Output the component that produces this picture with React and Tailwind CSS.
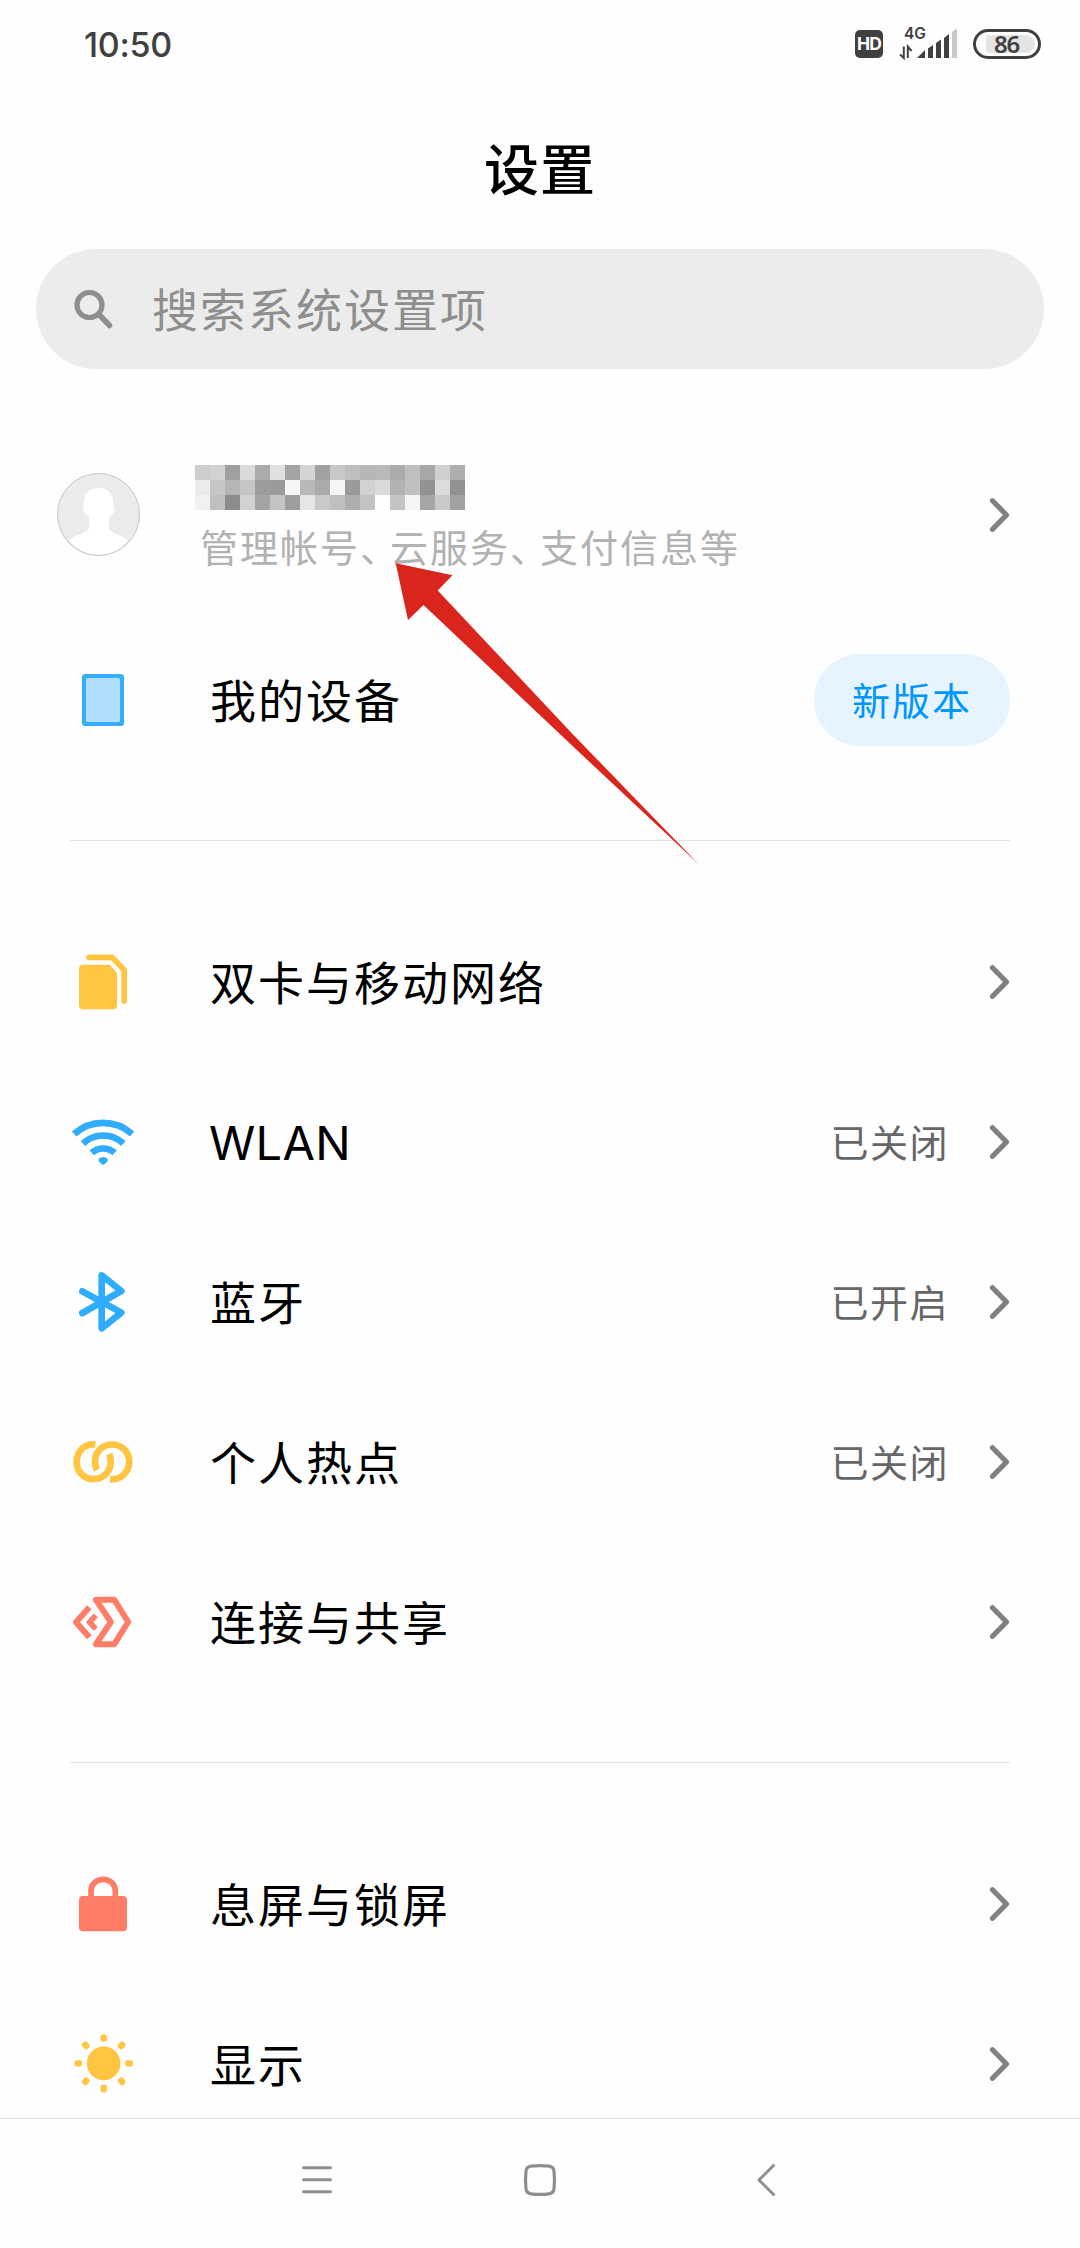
import React from "react";

const MOSAIC = [
  "#cdcdcd #d1d1d1 #9f9f9f #dadada #ababab #e0e0e0 #a4a4a4 #d4d4d4 #a1a1a1 #c7c7c7 #bebebe #b6b6b6 #b9b9b9 #ababab #bfbfbf #a7a7a7 #d0d0d0 #aeaeae",
  "#ebebeb #c6c6c6 #b5b5b5 #c5c5c5 #9c9c9c #9a9a9a #f6f6f6 #b8b8b8 #aaaaaa #f5f5f5 #9a9a9a #d1d1d1 #dadada #b2b2b2 #c0c0c0 #929292 #dbdbdb #919191",
  "#f1f1f1 #c0c0c0 #8b8b8b #d1d1d1 #a4a4a4 #c4c4c4 #9e9e9e #e5e5e5 #c9c9c9 #bfbfbf #aeaeae #c3c3c3 #fefefe #c4c4c4 #f5f5f5 #a6a6a6 #c9c9c9 #a1a1a1",
].flatMap((row) => row.split(" "));

function Icon({ viewBox, children }) {
  return (
    <svg className="h-[72px] w-[72px] shrink-0" viewBox={viewBox} fill="none">
      {children}
    </svg>
  );
}

const DeviceIcon = () => (
  <Icon viewBox="51 72 216 216">
    <rect x="96" y="102" width="126" height="156" rx="10" fill="#38adfc" />
    <rect x="108" y="114" width="102" height="132" rx="5" fill="#b0defd" />
  </Icon>
);

const SimIcon = () => (
  <Icon viewBox="51 48 216 216">
    <path d="M99 104H178L201 128V226Q201 238 189 238H99Q87 238 87 226V116Q87 104 99 104Z" fill="#ffc440" />
    <path d="M117 82H186L222.500 120V213" stroke="#ffc440" strokeWidth="17" strokeLinecap="round" strokeLinejoin="round" />
  </Icon>
);

const WifiIcon = () => (
  <Icon viewBox="51 528 216 216">
    <g stroke="#30acff" strokeWidth="20">
      <path d="M72.500 612A129 129 0 0 1 246 612" />
      <path d="M99 640.500A88 88 0 0 1 220 640.500" />
      <path d="M125 668.500A52 52 0 0 1 194 668.500" />
    </g>
    <path d="M146 686Q159.500 676 173 686Q175 691 171 696L159.500 706L148 696Q144 691 146 686Z" fill="#30acff" />
  </Icon>
);

const BluetoothIcon = () => (
  <Icon viewBox="51 48 216 216">
    <path d="M97 124L214 188L155 235V76L214 123L97 189" stroke="#30acff" strokeWidth="20" strokeLinecap="round" strokeLinejoin="round" />
  </Icon>
);

const HotspotIcon = () => (
  <Icon viewBox="51 528 216 216">
    <g stroke="#ffc440" strokeWidth="20">
      <path d="M136 583.500C105 580 80 604 80 635C80 665 102 687.500 130 687.500C160 687.500 182 665 182 635C182 626 181 619 178 612" />
      <path d="M180 687.500C211 691 237.500 667 237.500 635C237.500 606 215 583.500 187 583.500C157 583.500 135 606 135 635C135 645 137 653 141 660" />
    </g>
  </Icon>
);

const ShareIcon = () => (
  <Icon viewBox="51 1008 216 216">
    <path d="M138 1049.500H193L234.500 1116L193 1182.500H138L182.500 1116Z" stroke="#ff7c66" strokeWidth="18" strokeLinejoin="round" />
    <path d="M118 1072L78 1117L118 1162" stroke="#ff7c66" strokeWidth="18" strokeLinejoin="round" />
    <path d="M137 1096L119 1116.500L137 1137" stroke="#ff7c66" strokeWidth="17" />
  </Icon>
);

const LockIcon = () => (
  <Icon viewBox="51 54 216 216">
    <path d="M123 144V122A36.500 34 0 0 1 196 122V144" stroke="#ff7c66" strokeWidth="17" />
    <rect x="87" y="138" width="144" height="106" rx="12" fill="#ff7c66" />
  </Icon>
);

const RAYS = [0, 45, 90, 135, 180, 225, 270, 315];

const SunIcon = () => (
  <Icon viewBox="51 534 216 216">
    <circle cx="161" cy="640" r="50.500" fill="#ffc440" />
    {RAYS.map((a) => (
      <rect key={a} x="151.500" y="552.500" width="19" height="23" rx="7.500" fill="#ffc440" transform={`rotate(${a} 161 640)`} />
    ))}
  </Icon>
);

const Chevron = () => (
  <svg className="h-[40px] w-[24px] shrink-0" viewBox="0 0 24 40" fill="none">
    <path d="M6.500 5.700L20.500 20L6.500 34.300" stroke="#808080" strokeWidth="5.200" strokeLinecap="round" strokeLinejoin="round" />
  </svg>
);

function Row({ icon, label, value, latin }) {
  return (
    <div className="flex h-[160px] items-center pl-[67px] pr-[70px]">
      {icon}
      <span
        className={
          latin
            ? "ml-[70px] pt-[2px] font-['Inter',sans-serif] text-[47px] leading-[60px] tracking-[0.300px] text-black"
            : "mb-[4px] ml-[71px] text-[46px] leading-[60px] tracking-[2px] text-black"
        }
      >
        {label}
      </span>
      <span className="mb-[2px] ml-auto mr-[37px] text-[38px] leading-[50px] tracking-[1.500px] text-[#666]">{value}</span>
      <Chevron />
    </div>
  );
}

const Divider = () => <div className="ml-[70px] mr-[70px] h-px shrink-0 bg-[#e2e2e2]" />;

function StatusBar() {
  return (
    <div className="flex h-[88px] items-center pl-[84px] pr-[39px] font-['Inter',sans-serif] text-[#404040]">
      <span className="pt-[2px] text-[34px] font-medium leading-[40px] tracking-[-0.300px]">10:50</span>
      <span className="ml-auto flex h-[28px] w-[28px] items-center justify-center rounded-[5px] bg-[#404040] text-[17.500px] font-bold leading-none tracking-[-0.900px] text-white">
        HD
      </span>
      <svg className="ml-[16px] h-[34px] w-[60px] overflow-visible" viewBox="0 2 60 34">
        <text x="5" y="13.500" fontSize="15.500" fontWeight="600" fill="#404040" fontFamily="Inter, sans-serif">4G</text>
        <path d="M4.800 21.500V33L1 29.500M8.800 33V21.500L12.600 26" fill="none" stroke="#404040" strokeWidth="2" />
        <path d="M18 33L26 25V33ZM29 23.500L34 20V33H29ZM37 18L42 14.500V33H37ZM45 13L50 9V33H45Z" fill="#404040" />
        <path d="M53 7L58 3.500V33H53Z" fill="#c8c8c8" />
      </svg>
      <div className="ml-[14px] flex h-[30px] w-[68px] items-center rounded-full border-[3px] border-[#404040] pl-[10px]">
        <span className="flex h-[18px] w-[49px] items-center rounded-l-[3px] rounded-r-[9px] bg-[#e4e4e4] pl-[8px] font-['Noto_Sans',sans-serif] text-[24px] font-semibold leading-none tracking-[-1.200px]">
          86
        </span>
      </div>
    </div>
  );
}

export default function App() {
  return (
    <div className="relative flex h-[2248px] w-[1080px] flex-col overflow-hidden bg-[#fefefe] font-['Noto_Sans_CJK_SC',sans-serif]">
      <StatusBar />
      <h1 className="h-[161px] pt-[38px] text-center text-[55px] font-medium leading-[80px] tracking-[1px] text-black">设置</h1>

      <div className="mx-[36px] flex h-[120px] shrink-0 items-center rounded-full bg-[#ececec] pl-[38px]">
        <svg className="h-[40px] w-[40px]" viewBox="0 0 40 40" fill="none" stroke="#8e8e8e">
          <circle cx="15.500" cy="16" r="12.500" strokeWidth="5.200" />
          <path d="M25 25.500L35.500 36.500" strokeWidth="5.500" strokeLinecap="round" />
        </svg>
        <span className="mb-[4px] ml-[38px] text-[46px] leading-[60px] tracking-[2px] text-[#8e8e8e]">搜索系统设置项</span>
      </div>

      <div className="flex h-[251px] shrink-0 pl-[57px] pr-[70px] pt-[96px]">
        <svg className="mt-[8px] h-[84px] w-[84px] shrink-0" viewBox="0 0 84 84">
          <circle cx="41.500" cy="41.500" r="41" fill="#ebebeb" />
          <path d="M12 67C20 61 31 60 32 55V44C28 42 26 39 25.500 35Q27 34 26.800 30C27 20 33 15 41.500 15S56 20 56.500 30Q56 34 58 35C57.500 39 56 42 52 44V55C53 60 63 61 71 67C57 87 27 87 12 67Z" fill="#fff" />
          <circle cx="41.500" cy="41.500" r="41" fill="none" stroke="#c4c4c4" />
        </svg>
        <div className="ml-[54px]">
          <div className="grid w-[270px] grid-cols-18">
            {MOSAIC.map((color, i) => (
              <div key={i} className="h-[15px]" style={{ backgroundColor: color }} />
            ))}
          </div>
          <p className="ml-[5px] mt-[11px] whitespace-nowrap text-[38px] leading-[50px] tracking-[2px] text-[#b2b2b2]">
            管理帐号<span className="tracking-[-8px]">、</span>云服务<span className="tracking-[-8px]">、</span>支付信息等
          </p>
        </div>
        <div className="ml-auto mt-[30px]">
          <Chevron />
        </div>
      </div>

      <div className="flex h-[160px] shrink-0 items-center pl-[67px] pr-[70px]">
        <DeviceIcon />
        <span className="mb-[4px] ml-[71px] text-[46px] leading-[60px] tracking-[2px] text-black">我的设备</span>
        <span className="ml-auto flex h-[92px] w-[196px] items-center justify-center rounded-full bg-[#e6f4ff] pb-[3px] text-[38px] leading-[50px] tracking-[2px] text-[#0096ff]">
          新版本
        </span>
      </div>

      <div className="h-[60px] shrink-0" />
      <Divider />
      <div className="h-[61px] shrink-0" />

      <Row icon={<SimIcon />} label="双卡与移动网络" />
      <Row icon={<WifiIcon />} label="WLAN" value="已关闭" latin />
      <Row icon={<BluetoothIcon />} label="蓝牙" value="已开启" />
      <Row icon={<HotspotIcon />} label="个人热点" value="已关闭" />
      <Row icon={<ShareIcon />} label="连接与共享" />

      <div className="h-[60px] shrink-0" />
      <Divider />
      <div className="h-[61px] shrink-0" />

      <Row icon={<LockIcon />} label="息屏与锁屏" />
      <Row icon={<SunIcon />} label="显示" />

      <nav className="absolute inset-x-0 bottom-0 flex h-[130px] items-start border-t border-[#e2e2e2] bg-[#fefefe] pl-[300px] pt-[43px]">
        <svg className="h-[36px] w-[34px]" viewBox="0 0 34 36" stroke="#8e8e8e" strokeWidth="3" strokeLinecap="round">
          <path d="M3.500 5.700H30.500M3.500 17.700H30.500M3.500 29.700H30.500" />
        </svg>
        <svg className="ml-[188px] h-[36px] w-[36px]" viewBox="0 0 36 36" fill="none" stroke="#8e8e8e" strokeWidth="3.200">
          <path d="M9 4.200Q18 3 27 4.200Q31.500 4.800 32 9Q33 18 32 27Q31.500 31.200 27 31.800Q18 33 9 31.800Q4.500 31.200 4 27Q3 18 4 9Q4.500 4.800 9 4.200Z" />
        </svg>
        <svg className="ml-[197px] h-[36px] w-[24px]" viewBox="0 0 24 36" fill="none" stroke="#8e8e8e" strokeWidth="3" strokeLinecap="round" strokeLinejoin="round">
          <path d="M18.500 3.500L4 18L18.500 32.500" />
        </svg>
      </nav>

      <svg className="pointer-events-none absolute left-[390px] top-[560px] h-[310px] w-[315px]" viewBox="390 560 315 310">
        <path d="M395.700 563.300L452.500 575.300L437.700 590.500L573 734.500L699 864.500L580 753L423.500 605L408 620Z" fill="#da251c" />
      </svg>
    </div>
  );
}
